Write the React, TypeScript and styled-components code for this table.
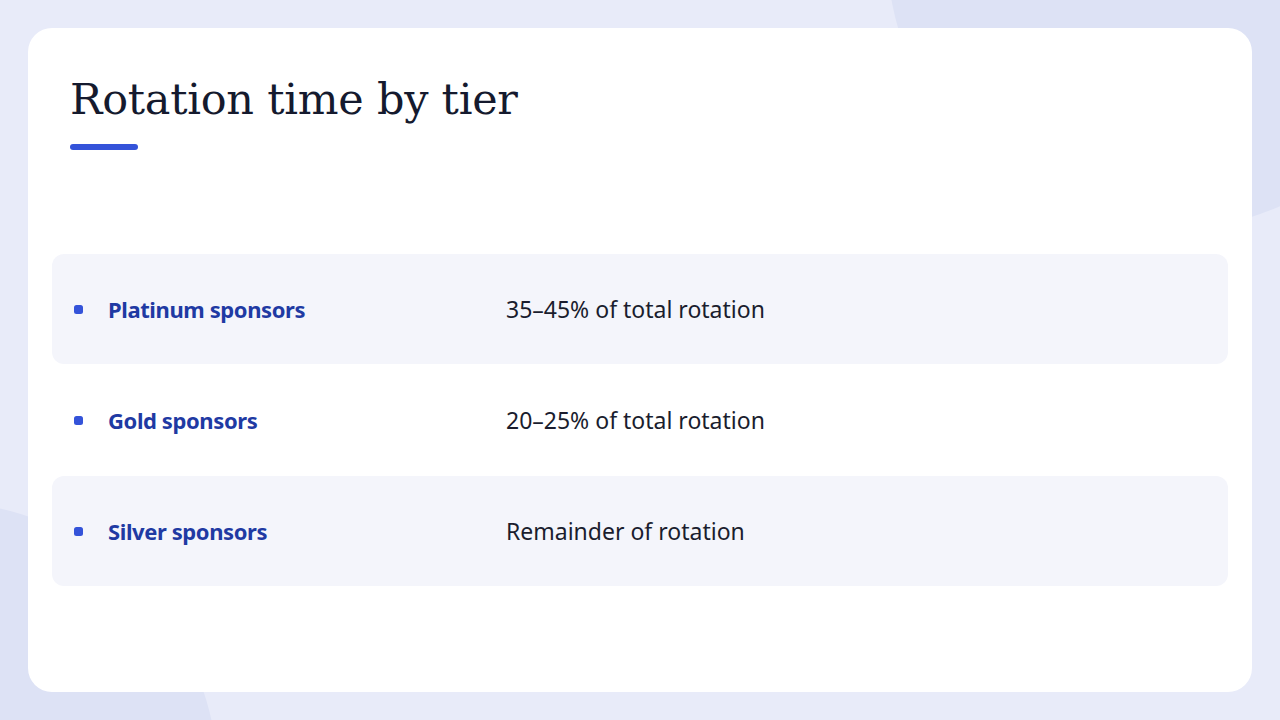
import React from "react";
import styled, { createGlobalStyle } from "styled-components";

const GlobalStyle = createGlobalStyle`
  html, body { margin: 0; padding: 0; }
  body {
    width: 1280px;
    height: 720px;
    overflow: hidden;
    background: #e7eaf9;
    font-family: "Noto Sans", "Lato", sans-serif;
  }
`;

const Stage = styled.div`
  position: relative;
  width: 1280px;
  height: 720px;
  box-sizing: border-box;
  padding: 28px;
  display: flex;
  background: #e8ebf9;
  overflow: hidden;
`;

const Backdrop = styled.svg`
  position: absolute;
  inset: 0;
  width: 1280px;
  height: 720px;
`;

const Card = styled.main`
  position: relative;
  flex: 1;
  background: #ffffff;
  border-radius: 24px;
  padding: 40px 24px 24px;
  display: flex;
  flex-direction: column;
`;

const Header = styled.header`
  padding: 0 18px;
  display: flex;
  flex-direction: column;
  gap: 14px;
`;

const Title = styled.h1`
  margin: 0;
  font-family: "DejaVu Serif", "Liberation Serif", serif;
  font-weight: 400;
  font-size: 43px;
  line-height: 62px;
  color: #151a2e;
  letter-spacing: -0.25px;
`;

const Accent = styled.div`
  width: 68px;
  height: 6px;
  border-radius: 3px;
  background: #3453d9;
`;

const List = styled.ul`
  list-style: none;
  margin: 104px 0 0;
  padding: 0;
  display: flex;
  flex-direction: column;
  gap: 1px;
`;

const Row = styled.li<{ $shaded: boolean }>`
  height: 110px;
  box-sizing: border-box;
  padding: 0 22px;
  border-radius: 12px;
  background: ${(p) => (p.$shaded ? "#f4f5fb" : "transparent")};
  display: grid;
  grid-template-columns: 9px 373px 1fr;
  column-gap: 25px;
  align-items: center;
`;

const Bullet = styled.span`
  width: 9px;
  height: 9px;
  border-radius: 2.5px;
  background: #3453d9;
`;

const Label = styled.span`
  font-size: 22px;
  font-weight: 700;
  color: #1f3aa3;
  letter-spacing: -0.4px;
`;

const Value = styled.span`
  font-size: 23px;
  font-weight: 400;
  color: #1a1d2e;
`;

const tiers = [
  { label: "Platinum sponsors", value: "35–45% of total rotation" },
  { label: "Gold sponsors", value: "20–25% of total rotation" },
  { label: "Silver sponsors", value: "Remainder of rotation" },
];

export default function App() {
  return (
    <>
      <GlobalStyle />
      <Stage>
        <Backdrop viewBox="0 0 1280 720" aria-hidden="true">
          <circle cx="1167" cy="-50" r="280" fill="#dde2f5" />
          <circle cx="-60" cy="780" r="278" fill="#dde2f5" />
        </Backdrop>
        <Card>
          <Header>
            <Title>Rotation time by tier</Title>
            <Accent />
          </Header>
          <List>
            {tiers.map((t, i) => (
              <Row key={t.label} $shaded={i % 2 === 0}>
                <Bullet />
                <Label>{t.label}</Label>
                <Value>{t.value}</Value>
              </Row>
            ))}
          </List>
        </Card>
      </Stage>
    </>
  );
}
